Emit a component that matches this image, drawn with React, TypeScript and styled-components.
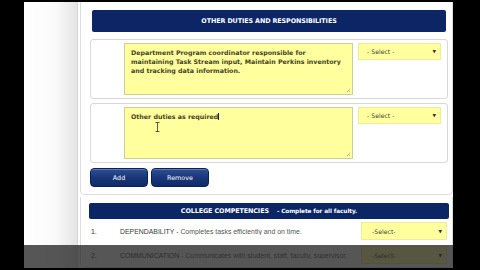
import React from "react";
import styled, { createGlobalStyle } from "styled-components";

const Global = createGlobalStyle`
  html, body {
    margin: 0;
    padding: 0;
    background: #000;
  }
  body {
    width: 480px;
    height: 270px;
    overflow: hidden;
  }
`;

const Stage = styled.div`
  width: 480px;
  height: 270px;
  box-sizing: border-box;
  padding: 2px 27px 2px 24px;
  background: #000;
`;

const Screen = styled.div`
  position: relative;
  display: flex;
  height: 100%;
  overflow: hidden;
  background: #fff;
`;

const Gutter = styled.div`
  width: 53px;
  flex: none;
  background: linear-gradient(to right, #ffffff 0%, #fafafa 60%, #e4e4e4 100%);
  border-right: 1px solid #d6d6d6;
`;

const Content = styled.div`
  flex: 1;
  display: flex;
  flex-direction: column;
  gap: 2px;
  padding-left: 2px;
`;

const Panel = styled.section<{ $pl: number; $pr: number; $pt: number; $pb: number }>`
  display: flex;
  flex-direction: column;
  border: 1px solid #dcdcdc;
  border-top: none;
  border-radius: 0 0 5px 5px;
  padding: ${(p) => `${p.$pt}px ${p.$pr}px ${p.$pb}px ${p.$pl}px`};
  background: #fff;
`;

const Header = styled.div<{ $h: number; $mx: number }>`
  height: ${(p) => p.$h}px;
  margin: 0 ${(p) => p.$mx}px;
  background: #0b2565;
  border-radius: 2px;
  display: flex;
  align-items: center;
  justify-content: center;
  color: #fff;
  font-family: "DejaVu Sans", Verdana, sans-serif;
  font-weight: bold;
  font-size: 6.4px;
  letter-spacing: -0.1px;
`;

const HeaderNote = styled.span`
  font-size: 5.8px;
  margin-left: 8px;
`;

const Rows = styled.div`
  display: flex;
  flex-direction: column;
  gap: 4px;
  margin-top: 7px;
`;

const DutyRow = styled.div`
  height: 60px;
  box-sizing: border-box;
  border: 1px solid #d8d8d8;
  border-radius: 3px;
  padding: 3px 5px 3px 33px;
  display: flex;
  gap: 5px;
  align-items: flex-start;
`;

const Area = styled.div`
  position: relative;
  width: 229px;
  height: 52px;
  box-sizing: border-box;
  background: #ffff9e;
  border: 1px solid #c9cf9e;
  padding: 4px 6px;
  font-family: "DejaVu Sans", Verdana, sans-serif;
  font-weight: bold;
  font-size: 6.3px;
  line-height: 9px;
  color: #46441f;
`;

const Caret = styled.span`
  display: inline-block;
  width: 1px;
  height: 7px;
  background: #222;
  vertical-align: -1px;
`;

const Cursor = styled.svg`
  position: absolute;
  left: 30px;
  top: 14px;
`;

const Grip = styled.svg`
  position: absolute;
  right: 1px;
  bottom: 1px;
`;

const Select = styled.div<{ $w: number; $h: number; $pl: number }>`
  width: ${(p) => p.$w}px;
  height: ${(p) => p.$h}px;
  box-sizing: border-box;
  background: #ffff9e;
  border: 1px solid #ecec9a;
  display: flex;
  align-items: center;
  justify-content: space-between;
  padding: 0 4px 0 ${(p) => p.$pl}px;
  font-family: "DejaVu Sans", Verdana, sans-serif;
  font-size: 6.2px;
  color: #444;
`;

const Arrow = styled.span`
  font-size: 4.5px;
  color: #333;
`;

const Buttons = styled.div`
  display: flex;
  gap: 3px;
  margin-top: 5px;
`;

const Button = styled.button`
  width: 58px;
  height: 19px;
  border: 1px solid #0a2058;
  border-radius: 4px;
  background: linear-gradient(to bottom, #2d4f95 0%, #1a377a 50%, #0f2a66 100%);
  color: #fff;
  font-family: "DejaVu Sans", Verdana, sans-serif;
  font-size: 6.4px;
  padding: 0;
  box-shadow: inset 0 1px 0 rgba(255, 255, 255, 0.25);
`;

const CompRow = styled.div`
  height: 24px;
  display: flex;
  align-items: center;
  padding: 0 2px 0 2px;
  font-family: "Liberation Sans", Arial, sans-serif;
  font-size: 6.9px;
  color: #555;
`;

const Num = styled.span`
  width: 29px;
  color: #333;
`;

const Desc = styled.span`
  flex: 1;
  white-space: nowrap;
  overflow: hidden;
`;

const Strong = styled.span`
  color: #3a3a3a;
`;

const PlayerBar = styled.div`
  position: absolute;
  left: 0;
  right: 0;
  top: 243px;
  height: 23px;
  background: rgba(38, 38, 38, 0.78);
`;

export default function App() {
  return (
    <Stage>
      <Global />
      <Screen>
        <Gutter />
        <Content>
          <Panel $pl={9} $pr={4} $pt={8} $pb={7}>
            <Header $h={22} $mx={2}>OTHER DUTIES AND RESPONSIBILITIES</Header>
            <Rows>
              <DutyRow>
                <Area>
                  Department Program coordinator responsible for maintaining Task Stream input, Maintain Perkins inventory and tracking data information.
                  <Grip width="5" height="5" viewBox="0 0 5 5">
                    <path d="M4 1 L1 4 M4 3 L3 4" stroke="#999" strokeWidth="0.7" />
                  </Grip>
                </Area>
                <Select $w={83} $h={17} $pl={8}>
                  - Select -<Arrow>▼</Arrow>
                </Select>
              </DutyRow>
              <DutyRow>
                <Area>
                  Other duties as required<Caret />
                  <Cursor width="5" height="10" viewBox="0 0 5 10">
                    <path d="M0.5 0.5 H4.5 M2.5 0.5 V9.5 M0.5 9.5 H4.5" stroke="#333" strokeWidth="0.8" fill="none" />
                  </Cursor>
                  <Grip width="5" height="5" viewBox="0 0 5 5">
                    <path d="M4 1 L1 4 M4 3 L3 4" stroke="#999" strokeWidth="0.7" />
                  </Grip>
                </Area>
                <Select $w={83} $h={17} $pl={8}>
                  - Select -<Arrow>▼</Arrow>
                </Select>
              </DutyRow>
            </Rows>
            <Buttons>
              <Button>Add</Button>
              <Button>Remove</Button>
            </Buttons>
          </Panel>
          <Panel $pl={8} $pr={3} $pt={6} $pb={0}>
            <Header $h={16} $mx={0}>
              COLLEGE COMPETENCIES<HeaderNote>- Complete for all faculty.</HeaderNote>
            </Header>
            <CompRow>
              <Num>1.</Num>
              <Desc>
                <Strong>DEPENDABILITY</Strong> - Completes tasks efficiently and on time.
              </Desc>
              <Select $w={86} $h={18} $pl={10}>
                -Select-<Arrow>▼</Arrow>
              </Select>
            </CompRow>
            <CompRow>
              <Num>2.</Num>
              <Desc>
                <Strong>COMMUNICATION</Strong> - Communicates with student, staff, faculty, supervisor.
              </Desc>
              <Select $w={86} $h={18} $pl={10}>
                -Select-<Arrow>▼</Arrow>
              </Select>
            </CompRow>
          </Panel>
        </Content>
        <PlayerBar />
      </Screen>
    </Stage>
  );
}
